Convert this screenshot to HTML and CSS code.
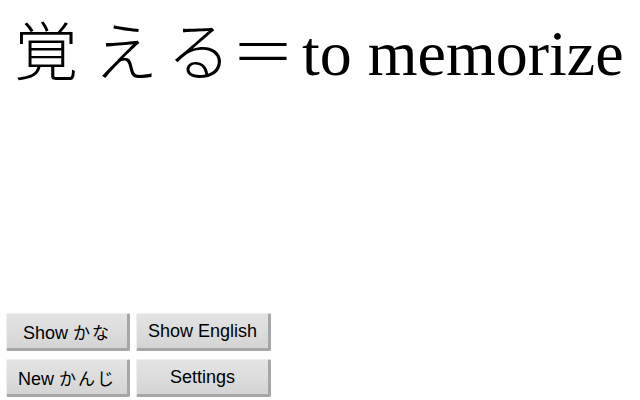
FILE: index.html
```html
<!DOCTYPE html>
<html lang="ja">
<head>
<meta charset="utf-8">
<link rel="stylesheet" href="styles.css">
</head>
<body>
<div class="page">
  <h1 class="word"><span class="jp">覚</span> <span class="jp">え</span><span class="sp-a"> </span><span class="jp">る＝</span><span class="sp-b"> </span>to memorize</h1>
  <div class="controls">
    <button class="btn">Show <span class="kana">かな</span></button>
    <button class="btn">Show English</button>
    <button class="btn">New <span class="kana">かんじ</span></button>
    <button class="btn">Settings</button>
  </div>
</div>
</body>
</html>
```
FILE: styles.css
```css
html, body {
  margin: 0;
  padding: 0;
  background: #fefefe;
}
.page {
  display: flex;
  flex-direction: column;
  height: 400px;
  box-sizing: border-box;
  padding: 0 0 3px 6px;
}
.word {
  margin: -1px 0 0 8px;
  font-family: "Liberation Serif", "Noto Sans CJK JP", serif;
  font-weight: normal;
  font-size: 64px;
  line-height: 1.5;
  color: #000;
  white-space: nowrap;
}
.jp {
  font-family: "Noto Sans CJK JP", serif;
  font-weight: 300;
}
.sp-a {
  word-spacing: -7px;
}
.sp-b {
  word-spacing: -9px;
}
.controls {
  margin-top: auto;
  display: grid;
  grid-template-columns: auto auto;
  justify-content: start;
  column-gap: 6px;
  row-gap: 8px;
}
.btn {
  font-family: "Liberation Sans", "Noto Sans CJK JP", sans-serif;
  font-size: 18px;
  color: #000;
  height: 38px;
  padding: 0 11px;
  border-style: solid;
  border-width: 1px 3px 3px 1px;
  border-color: #efefef #a6a6a6 #a6a6a6 #efefef;
  border-radius: 2px;
  background: linear-gradient(#e4e4e4, #d4d4d4);
}
.kana {
  font-size: 17px;
  letter-spacing: 2px;
}
```
